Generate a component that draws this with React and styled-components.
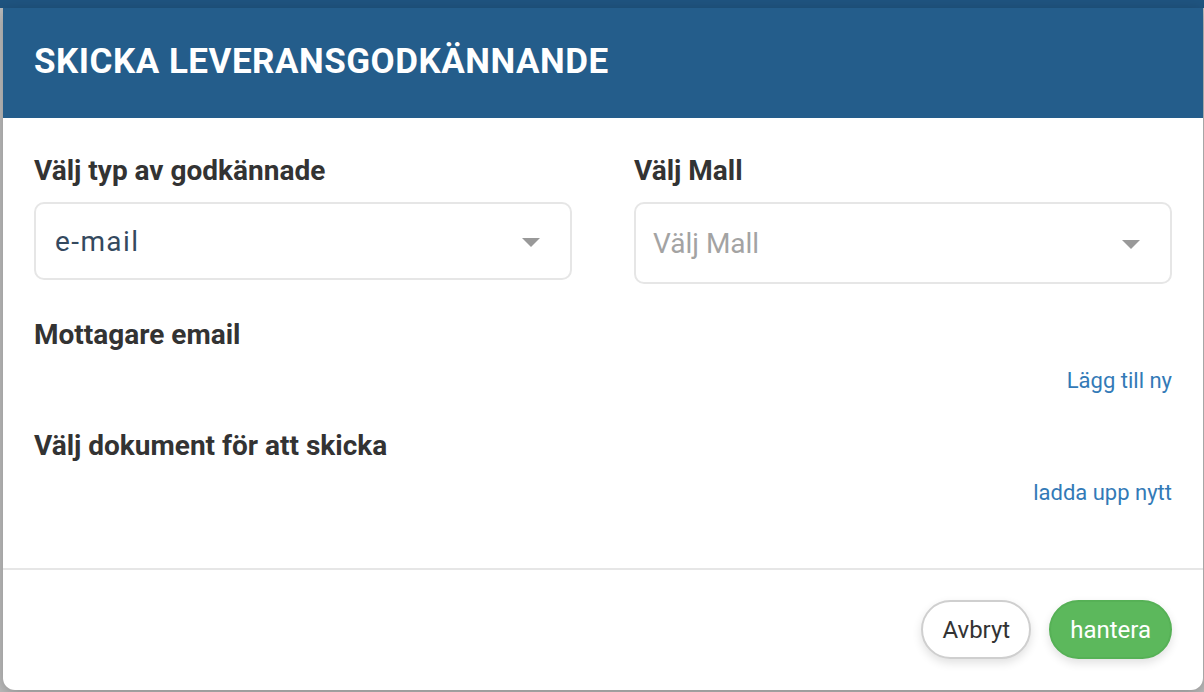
import React from 'react';
import styled, { createGlobalStyle } from 'styled-components';

//-----------------------------------------------{global}------------------------------------------------------//

const GlobalStyle = createGlobalStyle`
    html, body {
        margin: 0;
        padding: 0;
        height: 100%;
    }
    body {
        font-family: Roboto, 'Liberation Sans', Arial, sans-serif;
        overflow: hidden;
    }
    #root {
        height: 100%;
    }
`;

//-----------------------------------------------{styled components}------------------------------------------------------//

const Backdrop = styled.div`
    height: 692px;
    box-sizing: border-box;
    padding: 8px 1px 2px 3px;
    background: linear-gradient(to bottom, #1f5480 0, #1f5480 8px, #bdbdbd 8px);
`;

const Modal = styled.div`
    display: flex;
    flex-direction: column;
    height: 100%;
    background: #fff;
    border-radius: 0 0 12px 12px;
    overflow: hidden;
    box-shadow: 0 4px 16px rgba(0, 0, 0, 0.25);
`;

const Header = styled.div`
    background: #245d8b;
    height: 110px;
    display: flex;
    align-items: center;
    padding: 0 31px 4px;
    box-sizing: border-box;
`;

const Title = styled.h1`
    margin: 0;
    color: #fff;
    font-size: 35px;
    font-weight: 700;
    letter-spacing: 0.5px;
`;

const Body = styled.div`
    flex: 1;
    padding: 38px 31px 0;
    border-bottom: 2px solid #e6e6e6;
`;

const Row = styled.div`
    display: grid;
    grid-template-columns: 1fr 1fr;
    column-gap: 62px;
`;

const Field = styled.div`
    display: flex;
    flex-direction: column;
`;

const Label = styled.div`
    font-size: 28px;
    line-height: 30px;
    font-weight: 700;
    color: #333;
    margin-top: ${(p) => p.$top || 0}px;
`;

const Select = styled.div`
    margin-top: 16px;
    height: ${(p) => p.$height}px;
    box-sizing: border-box;
    border: 2px solid #e6e6e6;
    border-radius: 10px;
    display: flex;
    align-items: center;
    justify-content: space-between;
    padding: 0 30px 0 ${(p) => (p.$placeholder ? 17 : 19)}px;
    font-size: 28px;
    letter-spacing: ${(p) => (p.$placeholder ? 0 : 1.4)}px;
    color: ${(p) => (p.$placeholder ? '#a3a3a3' : '#34495e')};
`;

const Caret = styled.span`
    width: 0;
    height: 0;
    border-left: 9px solid transparent;
    border-right: 9px solid transparent;
    border-top: 9px solid #999;
    margin-top: 2px;
`;

const LinkRow = styled.div`
    display: flex;
    justify-content: flex-end;
    margin-top: ${(p) => p.$top}px;
`;

const Link = styled.a`
    font-size: 22px;
    line-height: 24px;
    color: #337ab7;
    text-decoration: none;
    cursor: pointer;
`;

const Footer = styled.div`
    height: 120px;
    box-sizing: border-box;
    display: flex;
    align-items: center;
    justify-content: flex-end;
    gap: 18px;
    padding: 0 31px 1px;
`;

const Button = styled.button`
    height: 59px;
    padding: 0 19px;
    border-radius: 30px;
    font-family: Roboto, 'Liberation Sans', Arial, sans-serif;
    font-size: 24px;
    cursor: pointer;
    border: 2px solid ${(p) => (p.$primary ? '#56b156' : '#cfcfcf')};
    background: ${(p) => (p.$primary ? '#5cb85c' : '#fff')};
    color: ${(p) => (p.$primary ? '#fff' : '#333')};
    box-shadow: 0 4px 10px rgba(0, 0, 0, 0.12);
`;

//-----------------------------------------------{App}------------------------------------------------------//

const App = () => {
    return (
        <>
            <GlobalStyle />
            <Backdrop>
                <Modal>
                    <Header>
                        <Title>SKICKA LEVERANSGODKÄNNANDE</Title>
                    </Header>
                    <Body>
                        <Row>
                            <Field>
                                <Label>Välj typ av godkännade</Label>
                                <Select $height={78}>
                                    e-mail
                                    <Caret />
                                </Select>
                            </Field>
                            <Field>
                                <Label>Välj Mall</Label>
                                <Select $height={82} $placeholder>
                                    Välj Mall
                                    <Caret />
                                </Select>
                            </Field>
                        </Row>
                        <Label $top={36}>Mottagare email</Label>
                        <LinkRow $top={19}>
                            <Link>Lägg till ny</Link>
                        </LinkRow>
                        <Label $top={38}>Välj dokument för att skicka</Label>
                        <LinkRow $top={20}>
                            <Link>ladda upp nytt</Link>
                        </LinkRow>
                    </Body>
                    <Footer>
                        <Button>Avbryt</Button>
                        <Button $primary>hantera</Button>
                    </Footer>
                </Modal>
            </Backdrop>
        </>
    );
};

export default App;
